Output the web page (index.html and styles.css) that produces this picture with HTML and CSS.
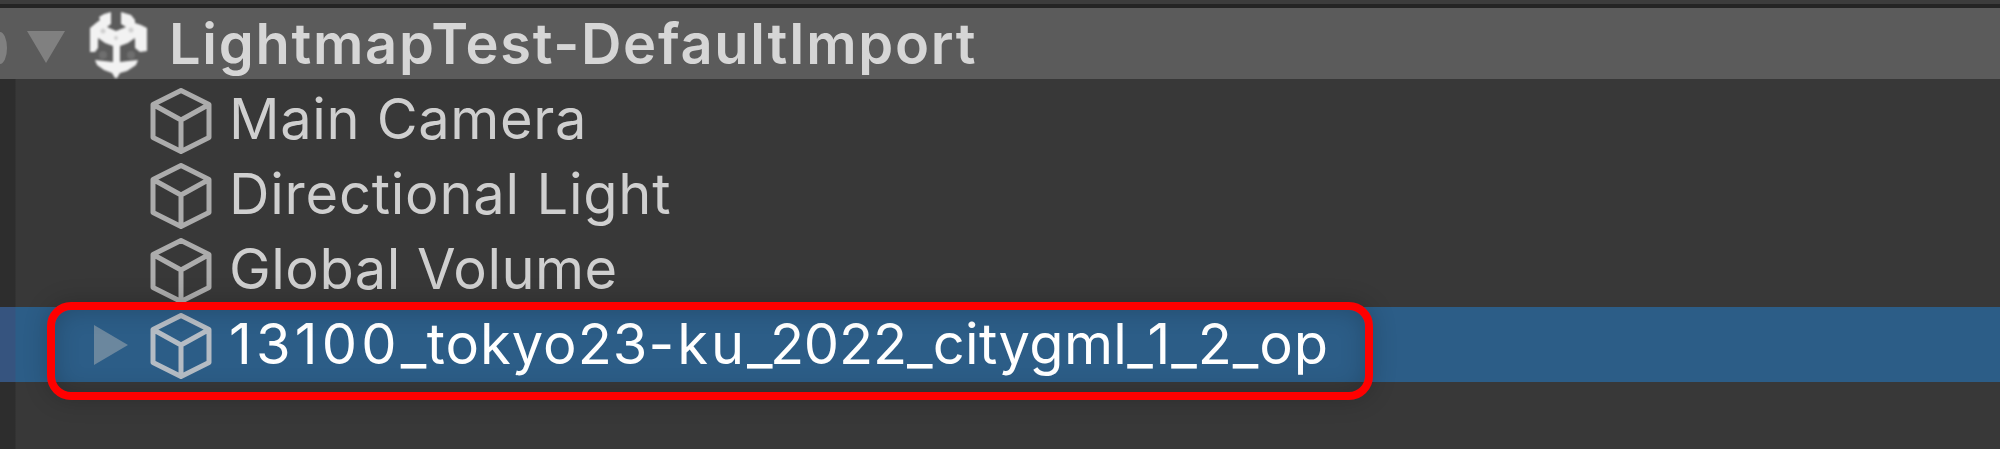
FILE: index.html
```
<!DOCTYPE html>
<html lang="en">
<head>
<meta charset="utf-8">
<title>Hierarchy</title>
<link rel="stylesheet" href="styles.css">
</head>
<body>
<svg class="defs" width="0" height="0">
  <symbol id="cube" viewBox="0 0 64 70">
    <path d="M32 4.500 L60 18.500 V51.500 L32 65.500 L4 51.500 V18.500 Z M4 18.500 L32 34 L60 18.500 M32 34 V65.500" fill="none" stroke="currentColor" stroke-width="5" stroke-linejoin="round"/>
  </symbol>
</svg>
<main class="hierarchy">
  <header class="scene">
    <span class="edge"></span>
    <svg class="fold" viewBox="0 0 40 34"><path d="M1 1H39L20 33Z" fill="#808080"/></svg>
    <svg class="logo" viewBox="8 10 60 68">
      <path fill="#f2f2f2" d="M31 12V24L27 27L36 31L46 27L41 24V12L51 15L55 20V23L61 25L67 28V51L60 52L55 48V38L48 43L40 46V62L48 61L58 60L56 65L47 71L40 73L37 78H35L32 73L24 70L17 65L15 60L24 61L33 62V46L25 43L18 38V48L15 52H10V28L16 23L20 20L19 17L24 14Z"/>
      <g fill="#d0d0d0"><circle cx="23" cy="31" r="2.500"/><circle cx="51" cy="30" r="2.500"/><circle cx="36" cy="38" r="2"/></g>
      <g fill="#6f6f6f"><circle cx="23" cy="55" r="4"/><circle cx="51" cy="55" r="4"/></g>
    </svg>
    <span class="title">LightmapTest-DefaultImport</span>
  </header>
  <section class="tree">
    <div class="row"><svg class="cube"><use href="#cube"/></svg><span class="name camera">Main Camera</span></div>
    <div class="row"><svg class="cube"><use href="#cube"/></svg><span class="name light">Directional Light</span></div>
    <div class="row"><svg class="cube"><use href="#cube"/></svg><span class="name volume">Global Volume</span></div>
    <div class="row selected">
      <svg class="expand" viewBox="0 0 34 40"><path d="M0 0L34 20L0 40Z" fill="#6b879e"/></svg>
      <svg class="cube"><use href="#cube"/></svg><span class="name city"><span class="code">13100</span><span class="joint">_</span><span class="place">tokyo23</span><span class="ward">-ku</span><span class="joint tight">_</span><span class="year">2022</span><span class="format">_citygml</span><span class="suffix">_1_2_op</span></span>
      <div class="marker"></div>
    </div>
  </section>
</main>
</body>
</html>
```
FILE: styles.css
```
* { box-sizing: border-box; }
body { margin: 0; background: #383838; font-family: Inter, "Liberation Sans", sans-serif; }
.defs { display: block; position: absolute; }
.hierarchy { width: 2000px; height: 449px; overflow: hidden; display: flex; flex-direction: column; }
.scene { height: 79px; flex: none; display: flex; align-items: flex-start; border-top: 4px solid #3c3c3c; background: linear-gradient(#242424 0 4px, #5b5b5b 4px); }
.edge { width: 7px; height: 32px; margin-top: 28px; border-radius: 0 7px 7px 0 / 0 16px 16px 0; background: #808080; }
.fold { width: 40px; height: 34px; margin: 26px 0 0 19px; }
.logo { width: 60px; height: 68px; margin: 6px 0 0 22px; filter: blur(1px); }
.title { margin-left: 21px; line-height: 75px; margin-top: 3px; font-size: 56px; font-weight: 600; letter-spacing: 1.7px; color: #d6d6d6; white-space: nowrap; filter: blur(.6px); }
.tree { flex: 1; padding-top: 3px; background: linear-gradient(90deg, #2d2d2d 15px, #383838 16px); }
.row { position: relative; height: 75px; display: flex; padding-left: 149px; color: #acacac; }
.cube { width: 64px; height: 70px; margin-top: 4px; flex: none; filter: blur(.7px); }
.name { margin-left: 16px; font-size: 56px; line-height: 75px; margin-top: 0; color: #cfcfcf; white-space: nowrap; filter: blur(.6px); }
.camera { letter-spacing: .65px; }
.light { letter-spacing: .78px; }
.volume { letter-spacing: .5px; }
.code { letter-spacing: 4.2px; }
.joint { letter-spacing: .3px; }
.tight { letter-spacing: -2.7px; }
.place { letter-spacing: 1px; }
.ward { letter-spacing: 3px; }
.year { letter-spacing: -.2px; }
.format { letter-spacing: .3px; }
.suffix { letter-spacing: .9px; }
.selected { padding-left: 94px; background: linear-gradient(90deg, #36547f 15px, #2c5d87 16px); color: #b5bcc4; }
.selected .name { color: #fff; }
.expand { width: 34px; height: 40px; margin: 18px 21px 0 0; }
.marker { position: absolute; left: 47px; top: -5.5px; width: 1326px; height: 98px; border: 8px solid #f00; border-radius: 24px; box-shadow: 0 0 24px rgba(0,0,0,.2), inset 0 0 24px rgba(0,0,0,.2); filter: blur(.5px); }
```
